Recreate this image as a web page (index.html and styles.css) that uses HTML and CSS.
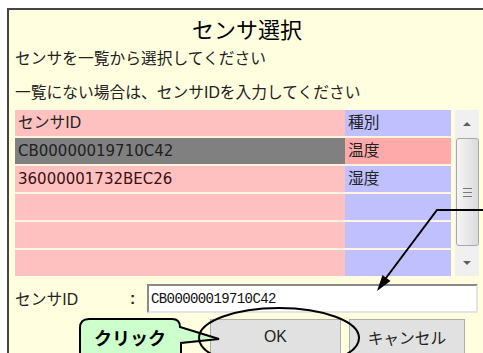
FILE: index.html
```html
<!DOCTYPE html>
<html lang="ja">
<head>
  <meta charset="UTF-8" />
  <title>センサ選択</title>
  <link rel="stylesheet" href="styles.css">
</head>
<body>
  <div class="dialog">
    <div class="title">センサ選択</div>
    <div class="line first">センサを一覧から選択してください</div>
    <div class="line second">一覧にない場合は、センサIDを入力してください</div>

    <div class="list">
      <div class="grid">
        <div class="cell id">センサID</div><div class="cell kind">種別</div>
        <div class="cell id selected mono">CB00000019710C42</div><div class="cell kind hot">温度</div>
        <div class="cell id mono">36000001732BEC26</div><div class="cell kind">湿度</div>
        <div class="cell id"></div><div class="cell kind"></div>
        <div class="cell id"></div><div class="cell kind"></div>
        <div class="cell id"></div><div class="cell kind"></div>
      </div>
      <div class="scrollbar">
        <div class="arrow up"></div>
        <div class="thumb"><span></span><span></span><span></span></div>
        <div class="arrow down"></div>
      </div>
    </div>

    <div class="idrow">
      <span class="idlabel">センサID</span>
      <span class="colon">:</span>
      <input class="idinput" type="text" value="CB00000019710C42">
    </div>

    <div class="buttons">
      <button class="btn ok">OK</button>
      <button class="btn cancel">キャンセル</button>
    </div>
  </div>

  <svg class="notes" width="483" height="353" viewBox="0 0 483 353">
    <path d="M89 319 H172 Q180 319 180 327 L219 339 L181 343 V360 H80 V328 Q80 319 89 319 Z" fill="#ccffcc" stroke="#000" stroke-width="2"/>
    <text x="130" y="345" text-anchor="middle" class="click">クリック</text>
    <ellipse cx="279" cy="338" rx="80" ry="30" fill="none" stroke="#000" stroke-width="2"/>
    <polyline points="484,210 437,210 386,278" fill="none" stroke="#000" stroke-width="2"/>
    <polygon points="377,291 390.5,281 382.5,275" fill="#000"/>
  </svg>
</body>
</html>
```

FILE: styles.css
```css
html, body { margin: 0; padding: 0; }
body { position: relative; width: 483px; height: 353px; overflow: hidden; background: #fff; color: #222; font-family: "Liberation Sans", "Noto Sans CJK JP", sans-serif; font-size: 15.75px; }

.dialog { margin: 8px 0 0 7px; width: 500px; height: 345px; overflow: hidden; box-sizing: border-box; padding-left: 6px; background: #ffffe0; border: 2px solid #444; border-right: none; border-bottom: none; }
.title { margin-top: 0; height: 36px; line-height: 36px; text-align: center; width: 464px; font-family: "Noto Sans CJK JP", sans-serif; font-size: 22px; font-weight: normal; color: #000; }
.line { height: 20px; line-height: 20px; }
.first { margin-top: 3px; }
.second { margin-top: 14px; }

.list { display: flex; gap: 4px; margin-top: 7px; height: 166px; }
.grid { display: grid; grid-template-columns: 330px 106px; grid-auto-rows: 26px; row-gap: 2px; background: #fff4e0; }
.cell { line-height: 26px; padding-left: 3px; white-space: nowrap; }
.id { background: #ffc0c0; }
.kind { background: #c0c0ff; }
.hot { background: #ffaaaa; }
.selected { background: #808080; }
.mono { font-family: "DejaVu Sans", sans-serif; font-size: 15px; color: #3a1010; }
.selected.mono { color: #202020; }

.scrollbar { width: 24px; background: #f0f0f0; display: flex; flex-direction: column; }
.arrow { height: 28px; position: relative; }
.arrow::after { content: ""; position: absolute; left: 8px; width: 0; height: 0; border-left: 4px solid transparent; border-right: 4px solid transparent; }
.up::after { top: 12px; border-bottom: 4px solid #606060; }
.down::after { top: 13px; border-top: 4px solid #606060; }
.thumb { flex: 1; margin: 0 0 2px 1px; border: 1px solid #a8a8a8; border-radius: 3px; background: linear-gradient(to right, #f4f4f4, #dcdcdc); display: flex; flex-direction: column; align-items: center; justify-content: center; gap: 3px; }
.thumb span { display: block; width: 9px; height: 1px; background: #7a7a7a; }

.idrow { display: flex; align-items: center; margin-top: 8px; height: 29px; }
.idlabel { width: 115px; }
.colon { width: 17px; font-weight: bold; }
.idinput { width: 331px; height: 29px; box-sizing: border-box; margin: 0; padding: 0 2px; border: 2px solid; border-color: #8a8a8a #e4e4e4 #e4e4e4 #8a8a8a; background: #fff; font-family: "Liberation Mono", monospace; font-size: 14px; letter-spacing: -0.6px; color: #111; outline: none; }

.buttons { display: flex; gap: 8px; margin-top: 6px; padding-left: 195px; }
.btn { flex: none; height: 36px; margin: 0; padding: 0; background: #e1e1e1; border: 1px solid #adadad; font-family: "Liberation Sans", "Noto Sans CJK JP", sans-serif; font-size: 15.75px; color: #222; }
.ok { width: 131px; }
.cancel { width: 116px; }

.notes { position: absolute; left: 0; top: 0; pointer-events: none; }
.click { font-family: "Noto Sans CJK JP", sans-serif; font-size: 18px; font-weight: bold; fill: #000; }
```
